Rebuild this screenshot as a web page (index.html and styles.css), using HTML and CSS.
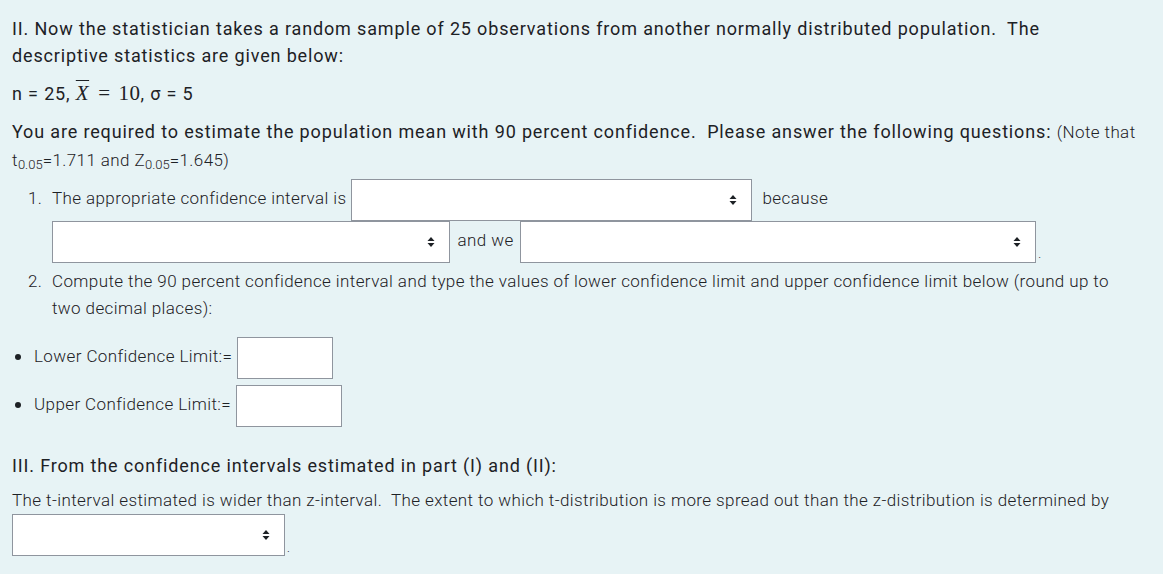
FILE: index.html
```html
<!DOCTYPE html>
<html>
<head>
<meta charset="utf-8">
<link rel="stylesheet" href="styles.css">
</head>
<body>
<div class="page">
  <p class="para">II. Now the statistician takes a random sample of 25 observations from another normally distributed population.&nbsp; The descriptive statistics are given below:</p>
  <p class="para">n = 25, <span class="math"><span class="xbar">X</span><span class="eq">=</span>10</span>, σ = 5</p>
  <p class="para tight">You are required to estimate the population mean with 90 percent confidence.&nbsp; Please answer the following questions: <span class="light">(Note that t<sub>0.05</sub>=1.711 and Z<sub>0.05</sub>=1.645)</span></p>
  <ol class="qlist">
    <li>The appropriate confidence interval is <span class="sel sel-a"><select><option></option></select><svg class="arrow" viewBox="0 0 8 12" width="8" height="12"><path d="M4 1 L7.5 5 H0.5 Z M4 11 L7.5 7 H0.5 Z" fill="#1d2125"/></svg></span> because <span class="sel sel-b"><select><option></option></select><svg class="arrow" viewBox="0 0 8 12" width="8" height="12"><path d="M4 1 L7.5 5 H0.5 Z M4 11 L7.5 7 H0.5 Z" fill="#1d2125"/></svg></span> and we <span class="sel sel-c"><select><option></option></select><svg class="arrow" viewBox="0 0 8 12" width="8" height="12"><path d="M4 1 L7.5 5 H0.5 Z M4 11 L7.5 7 H0.5 Z" fill="#1d2125"/></svg></span><span class="dot">.</span></li>
    <li>Compute the 90 percent confidence interval and type the values of lower confidence limit and upper confidence limit below (round up to two decimal places):</li>
  </ol>
  <ul class="blist">
    <li>Lower Confidence Limit:=<input class="box box-lo" type="text"></li>
    <li>Upper Confidence Limit:=<input class="box box-up" type="text"></li>
  </ul>
  <p class="para head3">III. From the confidence intervals estimated in part (I) and (II):</p>
  <p class="light body">The t-interval estimated is wider than z-interval.&nbsp; The extent to which t-distribution is more spread out than the z-distribution is determined by <span class="sel sel-d"><select><option></option></select><svg class="arrow" viewBox="0 0 8 12" width="8" height="12"><path d="M4 1 L7.5 5 H0.5 Z M4 11 L7.5 7 H0.5 Z" fill="#1d2125"/></svg></span><span class="dot">.</span></p>
</div>
</body>
</html>
```
FILE: styles.css
```css
html, body {
  margin: 0;
  padding: 0;
  background: #e7f3f5;
}
.page {
  padding: 15px 22px 0 12px;
  font-family: Roboto, "Liberation Sans", sans-serif;
  color: #1d2125;
  font-size: 18px;
  letter-spacing: 0.85px;
  line-height: 27px;
}
.para {
  margin: 0 0 11px 0;
}
.para.tight {
  margin-bottom: 5px;
}
.light {
  font-weight: 300;
  font-size: 17px;
  letter-spacing: 0.4px;
}
sub {
  font-size: 13px;
  line-height: 0;
  vertical-align: -3px;
  letter-spacing: 0;
}
.math {
  font-family: "Liberation Serif", serif;
  font-size: 21px;
  letter-spacing: 0.5px;
}
.xbar {
  font-style: italic;
  text-decoration: overline;
  text-decoration-thickness: 1px;
}
.eq {
  margin: 0 8px 0 9px;
}
.qlist {
  margin: 0 0 15px 0;
  padding-left: 40px;
  font-weight: 300;
  font-size: 17px;
  letter-spacing: 0.4px;
  line-height: 27px;
  list-style: none;
  counter-reset: q;
}
.qlist li {
  counter-increment: q;
}
.qlist li::before {
  content: counter(q) ".";
  display: inline-block;
  width: 24px;
  margin-left: -24px;
}
.sel {
  position: relative;
  display: inline-block;
  vertical-align: middle;
  height: 42px;
}
.sel select {
  appearance: none;
  -webkit-appearance: none;
  height: 42px;
  width: 100%;
  margin: 0;
  border: 1px solid #8f959e;
  border-radius: 0;
  background: #fff;
  box-sizing: border-box;
  display: block;
}
.sel .arrow {
  position: absolute;
  right: 15px;
  top: 15px;
  pointer-events: none;
}
.sel-a { width: 401px; margin-right: 6px; }
.sel-b { width: 398px; margin-right: 3px; }
.sel-c { width: 516px; margin-left: 2px; }
.sel-d { width: 273px; }
.dot {
  display: inline-block;
  vertical-align: -12px;
  margin-left: 2px;
  font-size: 12px;
}
.blist {
  margin: 0 0 25px 0;
  padding-left: 22px;
  font-weight: 300;
  font-size: 17px;
  letter-spacing: 0.4px;
  line-height: 27px;
}
.blist li {
  margin-bottom: 6px;
}
.blist li::marker {
  font-size: 20px;
}
.box {
  box-sizing: border-box;
  height: 42px;
  border: 1px solid #8f959e;
  border-radius: 0;
  background: #fff;
  vertical-align: middle;
  margin: 0 0 0 5px;
  padding: 0;
}
.box-lo { width: 96px; }
.box-up { width: 106px; }
.head3 {
  margin-bottom: 8px;
}
.body {
  margin: 0;
  line-height: 27px;
}
```
